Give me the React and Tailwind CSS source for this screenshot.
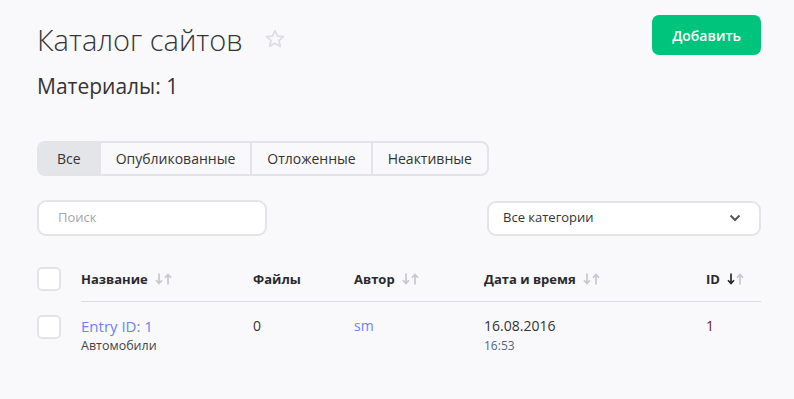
// Catalog page: header, status tabs, filters and entries table
import React from 'react';

function SortArrows({ active }) {
  return (
    <span className="ml-[7px] inline-flex items-center text-[#c8c8cc]">
      <svg width="8" height="12" viewBox="0 0 8 12" className={active ? 'text-[#2a2a2e]' : ''}>
        <path d="M4 0.5v10M1 7.2L4 10.5 7 7.2" fill="none" stroke="currentColor" strokeWidth="1.7" />
      </svg>
      <svg width="8" height="12" viewBox="0 0 8 12" className="ml-[1px]">
        <path d="M4 11.5v-10M1 4.8L4 1.5 7 4.8" fill="none" stroke="currentColor" strokeWidth="1.7" />
      </svg>
    </span>
  );
}

function Checkbox() {
  return <div className="h-6 w-6 rounded-[5px] border-2 border-[#e4e4e8] bg-white" />;
}

export default function App() {
  const tabs = ['Все', 'Опубликованные', 'Отложенные', 'Неактивные'];

  return (
    <div className="min-h-[399px] bg-[#f9f9fb] pl-[37px] pr-[33px] pt-[15px] text-[#333] [font-family:'Open_Sans',sans-serif]">
      {/* Header */}
      <div className="flex items-start justify-between">
        <div className="flex items-center pt-[5px]">
          <h1 className="text-[29px] font-light leading-[40px] text-[#34343a]">Каталог сайтов</h1>
          <svg width="22" height="22" viewBox="0 0 24 24" className="ml-[21px] mt-[-2px]">
            <path
              d="M12 2.8l2.7 6 6.5.6-4.9 4.3 1.5 6.4L12 16.7l-5.8 3.4 1.5-6.4-4.9-4.3 6.5-.6z"
              fill="none"
              stroke="#dcdce2"
              strokeWidth="1.8"
              strokeLinejoin="round"
            />
          </svg>
        </div>
        <button className="h-10 rounded-[7px] bg-[#00c47c] px-[20px] text-[14px] font-semibold text-white">
          Добавить
        </button>
      </div>

      <div className="mt-[11px] text-[21px] leading-[30px] text-[#333]">Материалы: 1</div>

      {/* Tabs */}
      <div className="mt-[40px] inline-flex h-[35px] overflow-hidden rounded-[8px] border-2 border-[#e4e4e8] text-[14px]">
        {tabs.map((t, i) => (
          <div
            key={t}
            className={
              'flex items-center ' +
              (i === 0 ? 'bg-[#e4e5e9] px-[18px]' : 'border-l-2 border-[#e4e4e8] px-[15px]')
            }
          >
            {t}
          </div>
        ))}
      </div>

      {/* Filters */}
      <div className="mt-[24px] flex items-center justify-between">
        <div className="flex h-[36px] w-[230px] items-center rounded-[9px] border-2 border-[#e4e4e8] bg-white px-[19px] text-[13px] text-[#a5a5ab]">
          Поиск
        </div>
        <div className="flex h-[35px] w-[274px] items-center justify-between rounded-[9px] border-2 border-[#e4e4e8] bg-white pl-[14px] pr-[18px] text-[13px] text-[#333]">
          <span>Все категории</span>
          <svg width="12" height="8" viewBox="0 0 12 8">
            <path d="M1.5 1.5L6 6l4.5-4.5" fill="none" stroke="#555" strokeWidth="2" />
          </svg>
        </div>
      </div>

      {/* Table */}
      <div className="mt-[31px]">
        <div className="flex items-start">
          <div className="w-[44px] shrink-0">
            <Checkbox />
          </div>
          <div className="flex flex-1 items-center border-b border-[#dcdce0] pb-[10px] text-[13px] font-bold leading-[24px] text-[#2a2a2e]">
            <div className="flex w-[172px] items-center">Название<SortArrows /></div>
            <div className="w-[101px]">Файлы</div>
            <div className="flex w-[130px] items-center">Автор<SortArrows /></div>
            <div className="flex w-[222px] items-center">Дата и время<SortArrows /></div>
            <div className="flex items-center">ID<SortArrows active /></div>
          </div>
        </div>
        <div className="mt-[13px] flex items-start">
          <div className="w-[44px] shrink-0">
            <Checkbox />
          </div>
          <div className="flex flex-1 items-start text-[14px]">
            <div className="w-[172px]">
              <div className="text-[15px] leading-[22px] text-[#6d82f2]">Entry ID: 1</div>
              <div className="text-[12.5px] leading-[17px] text-[#444]">Автомобили</div>
            </div>
            <div className="w-[101px] leading-[22px]">0</div>
            <div className="w-[130px] leading-[22px] text-[#6d82f2]">sm</div>
            <div className="w-[222px]">
              <div className="leading-[22px]">16.08.2016</div>
              <div className="text-[12px] leading-[17px] text-[#5a6478]">16:53</div>
            </div>
            <div className="leading-[22px] text-[#6b2424]">1</div>
          </div>
        </div>
      </div>
    </div>
  );
}
